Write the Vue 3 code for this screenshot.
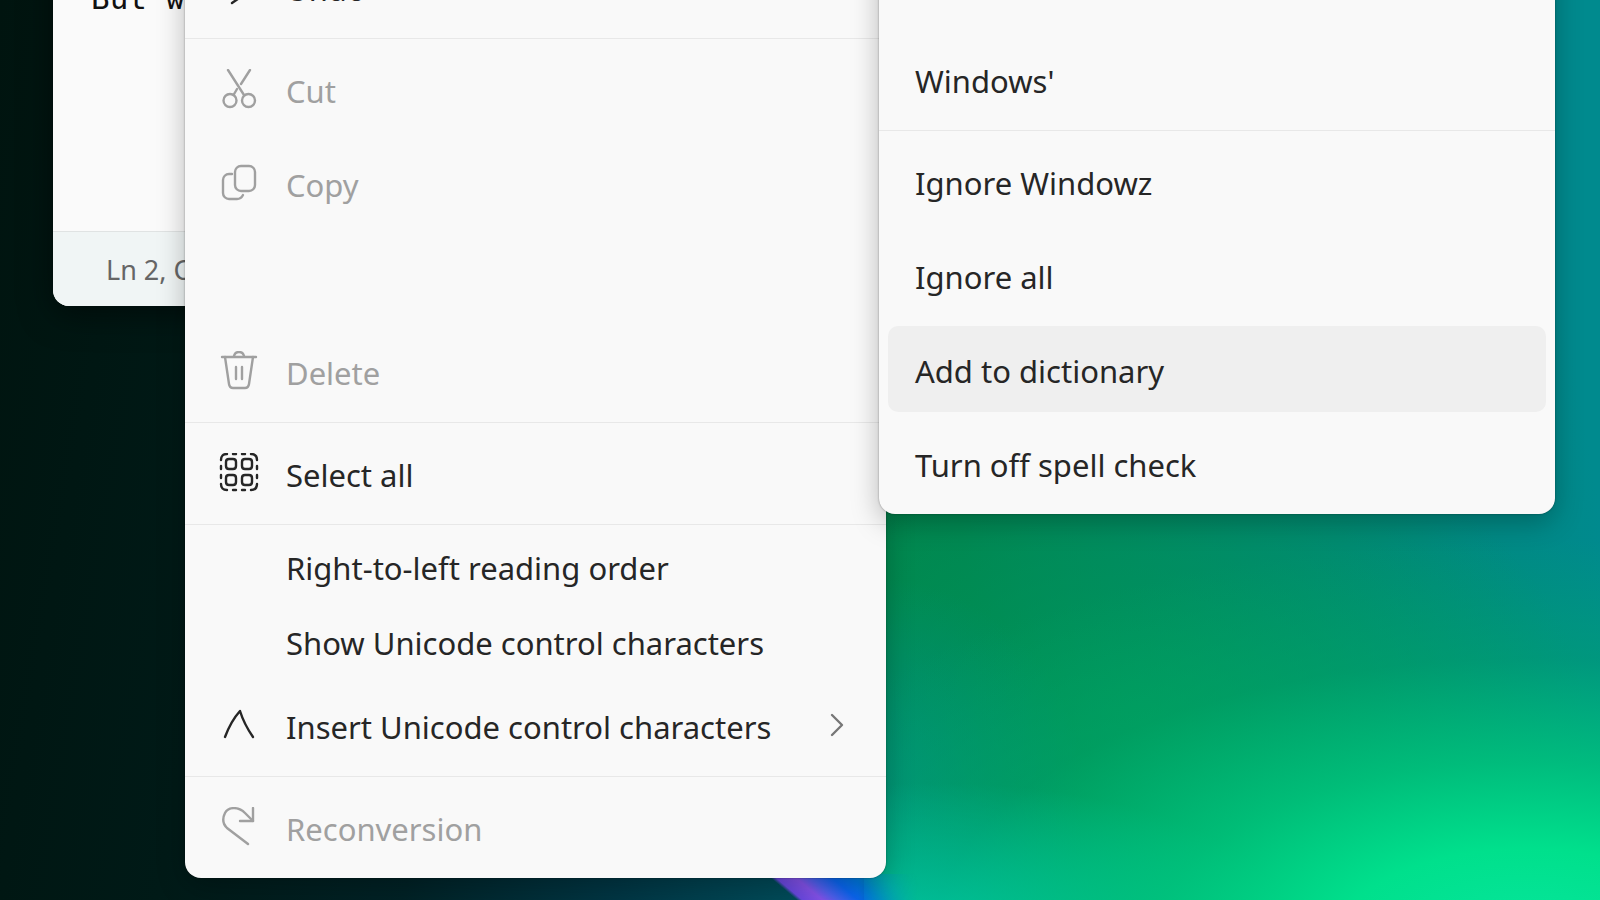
<template>
  <main class="desktop">
    <div class="glow"></div>
    <div class="petal"></div>

    <section class="notepad">
      <div class="editor">But windowz</div>
      <footer class="status">Ln 2, Col 5</footer>
    </section>

    <div class="menu main-menu" role="menu">
      <template v-for="(group, g) in groups" :key="g">
        <hr v-if="g > 0" />
        <button
          v-for="item in group"
          :key="item.label"
          type="button"
          role="menuitem"
          class="item"
          :class="{ compact: item.compact }"
          :disabled="item.disabled"
        >
          <svg class="icon" viewBox="0 0 40 40" aria-hidden="true">
            <path v-for="d in icons[item.icon]" :key="d" :d="d" />
          </svg>
          <span class="label">{{ item.label }}</span>
          <svg v-if="item.more" class="chevron" viewBox="0 0 16 24" aria-hidden="true">
            <path d="M3 2 13 12 3 22" />
          </svg>
        </button>
      </template>
    </div>

    <div class="menu sub-menu" role="menu">
      <template v-for="(group, g) in spelling" :key="g">
        <hr v-if="g > 0" />
        <button
          v-for="label in group"
          :key="label"
          type="button"
          role="menuitem"
          class="item"
          :class="{ active: label === active }"
          @mouseenter="active = label"
        >
          <span class="label">{{ label }}</span>
        </button>
      </template>
    </div>
  </main>
</template>

<script setup>
import { ref } from 'vue'

const active = ref('Add to dictionary')

const groups = [
  [{ label: 'Undo', icon: 'undo' }],
  [
    { label: 'Cut', icon: 'cut', disabled: true },
    { label: 'Copy', icon: 'copy', disabled: true },
    { label: '', disabled: true },
    { label: 'Delete', icon: 'trash', disabled: true }
  ],
  [{ label: 'Select all', icon: 'select' }],
  [
    { label: 'Right-to-left reading order', compact: true },
    { label: 'Show Unicode control characters', compact: true },
    { label: 'Insert Unicode control characters', icon: 'insert', more: true }
  ],
  [{ label: 'Reconversion', icon: 'redo', disabled: true }]
]

const spelling = [
  ['Windows', "Windows'"],
  ['Ignore Windowz', 'Ignore all', 'Add to dictionary', 'Turn off spell check']
]

const icons = {
  undo: ['M4 4v12h12', 'M4 15 13 7c6-5 16-3 19 4s0 11-3 14L13 36'],
  cut: [
    'M9 1 25 26',
    'M31 1 22 15',
    'M18 20 14.500 26',
    'M17.500 31.500a6.500 6.500 0 1 1-13 0a6.500 6.500 0 1 1 13 0',
    'M36 31.500a6.500 6.500 0 1 1-13 0a6.500 6.500 0 1 1 13 0'
  ],
  copy: [
    'M22 3h8a6 6 0 0 1 6 6v13a6 6 0 0 1-6 6h-8a6 6 0 0 1-6-6v-13a6 6 0 0 1 6-6z',
    'M13 11h-3a6 6 0 0 0-6 6v13a6 6 0 0 0 6 6h8q4 0 6-4'
  ],
  trash: ['M3 6h34', 'M6 6 10 33q.6 4 4 4h12q3.400 0 4-4L34 6', 'M15 5q1-4 5-4t5 4', 'M17 16v12', 'M23 16v12'],
  select: [
    'M2 7q0-6 6-6', 'M32 1q6 0 6 6', 'M38 31q0 6-6 6', 'M8 37q-6 0-6-6',
    'M14 1h3', 'M23 1h3', 'M14 37h3', 'M23 37h3', 'M2 13v3', 'M2 22v3', 'M38 13v3', 'M38 22v3',
    'M10 6h4q3 0 3 3v4q0 3-3 3h-4q-3 0-3-3v-4q0-3 3-3z',
    'M26 6h4q3 0 3 3v4q0 3-3 3h-4q-3 0-3-3v-4q0-3 3-3z',
    'M10 22h4q3 0 3 3v4q0 3-3 3h-4q-3 0-3-3v-4q0-3 3-3z',
    'M26 22h4q3 0 3 3v4q0 3-3 3h-4q-3 0-3-3v-4q0-3 3-3z'
  ],
  insert: ['M6 32Q12 16 21 6Q25 19 34 32'],
  redo: ['M34 1v13h-13', 'M34 14 26 6C19-1 9 0 6 6s-2 11 2 15L29 37']
}
</script>

<style>
body {
  overflow: hidden;
}
</style>

<style scoped>
.desktop {
  position: relative;
  min-height: 100vh;
  overflow: hidden;
  background: linear-gradient(100deg, #00140f 0%, #001a17 18%, #002226 32%, #003644 44%, #00505e 56%, #00606a 100%);
  font-family: 'Noto Sans', 'Open Sans', sans-serif;
}

/* the bright half of the wallpaper */
.glow {
  position: absolute;
  inset: 0 0 0 54%;
  background:
    radial-gradient(ellipse 115% 44% at 90% 104%, #06e69c 0%, #00e08c 22%, rgba(0, 200, 124, 0.8) 44%, rgba(0, 172, 106, 0.4) 70%, rgba(0, 150, 100, 0) 100%),
    radial-gradient(ellipse 48% 16% at 10% 103%, #00d0be 0%, rgba(0, 190, 168, 0.75) 45%, rgba(0, 160, 140, 0) 100%),
    radial-gradient(ellipse 30% 24% at 0% 88%, rgba(0, 146, 130, 0.9) 0%, rgba(0, 146, 126, 0) 100%),
    radial-gradient(ellipse 60% 34% at 38% 80%, rgba(0, 154, 90, 0.8) 0%, rgba(0, 150, 90, 0) 100%),
    linear-gradient(80deg, #00864a 0%, #008450 18%, #00866e 50%, #008a8e 90%);
}

.petal {
  position: absolute;
  bottom: 0;
  left: 48%;
  width: 150px;
  height: 26px;
  background: linear-gradient(40deg, rgba(90, 60, 220, 0) 16%, #6a48e0 19%, #8452ea 30%, #4e60ee 38%, #0a66f0 50%, #0078e0 62%, #009cc0 78%, rgba(0, 190, 180, 0) 100%);
  mask-image: linear-gradient(to right, #000 60%, transparent);
}

.notepad {
  position: absolute;
  top: -94px;
  left: 53px;
  width: 800px;
  height: 400px;
  display: flex;
  flex-direction: column;
  overflow: hidden;
  border-radius: 16px;
  background: #fafafa;
  box-shadow: 0 8px 32px rgba(0, 0, 0, 0.5);
}

.editor {
  flex: 1;
  padding: 72px 38px 0;
  font: 31px/40px 'DejaVu Sans Mono', monospace;
  color: #111;
}

.status {
  height: 74px;
  padding-left: 53px;
  border-top: 1px solid #e0e3e3;
  background: #f0f5f5;
  font-size: 27px;
  line-height: 76px;
  color: #666;
}

.menu {
  position: absolute;
  box-sizing: border-box;
  display: flex;
  flex-direction: column;
  padding: 4px 0;
  border-radius: 16px;
  background: #f9f9f9;
  box-shadow: 0 0 2px rgba(0, 0, 0, 0.4), 0 8px 28px rgba(0, 0, 0, 0.26);
}

.main-menu {
  top: -64px;
  left: 185px;
  width: 701px;
}

.sub-menu {
  top: -66px;
  left: 879px;
  width: 676px;
}

.menu hr {
  width: 100%;
  height: 1px;
  margin: 4px 0 3px;
  border: 0;
  background: #e8e8e8;
}

.item {
  display: flex;
  align-items: center;
  gap: 27px;
  height: 86px;
  margin: 4px 9px;
  padding: 4px 32px 0 25px;
  border: 0;
  border-radius: 10px;
  background: transparent;
  font-family: inherit;
  font-size: 31px;
  line-height: 44px;
  text-align: left;
  color: #262626;
}

.item.compact {
  height: 67px;
}

.item:disabled {
  color: #a0a0a0;
}

.sub-menu .item {
  padding-left: 27px;
}

.item.active {
  background: #efefef;
}

.label {
  flex: 1;
  white-space: nowrap;
}

.icon {
  width: 40px;
  height: 40px;
  margin-bottom: 4px;
}

.icon,
.chevron {
  flex: none;
  fill: none;
  stroke: currentColor;
  stroke-width: 2.4;
  stroke-linecap: round;
  stroke-linejoin: round;
}

.chevron {
  width: 16px;
  height: 24px;
  margin-bottom: 4px;
  color: #777;
}
</style>
